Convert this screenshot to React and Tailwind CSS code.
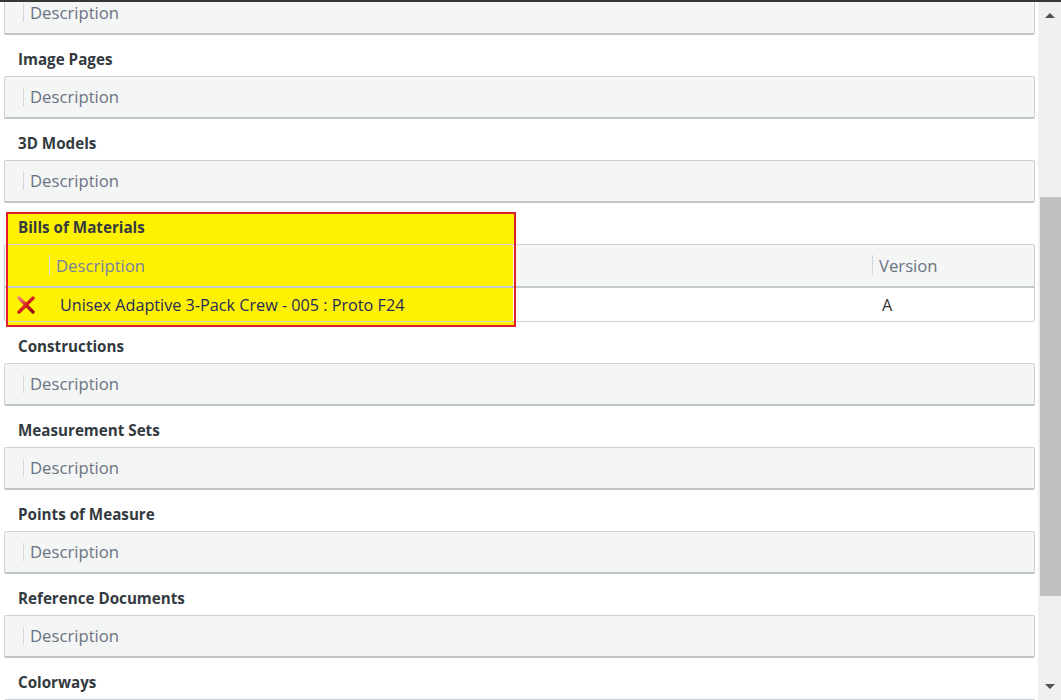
import React from "react";

const font = { fontFamily: '"Open Sans", "Noto Sans", sans-serif' };

function Heading({ children }) {
  return (
    <div className="h-[41px] pt-[14px] pl-[14px] text-[15.2px] leading-[21px] font-bold text-[#333a40]">
      {children}
    </div>
  );
}

function EmptyPanel() {
  return (
    <div className="h-[43px] rounded-[2px] border border-[#cfd2d4] border-b-2 border-b-[#bfc4c7] bg-[#f4f5f5] flex items-center pl-[18px]">
      <span className="w-px h-[18px] bg-[#d3d6d8]" />
      <span className="pl-[6px] text-[16.7px] text-[#6b7381]">Description</span>
    </div>
  );
}

function DeleteIcon() {
  return (
    <svg width="20" height="18" viewBox="0 0 20 18">
      <defs>
        <linearGradient id="xg" x1="0" y1="0" x2="1" y2="1">
          <stop offset="0" stopColor="#f28080" />
          <stop offset="0.5" stopColor="#d42020" />
          <stop offset="1" stopColor="#8e1010" />
        </linearGradient>
      </defs>
      <path d="M3 2 L17 16" stroke="url(#xg)" strokeWidth="3.4" strokeLinecap="round" />
      <path d="M17 2 L3 16" stroke="url(#xg)" strokeWidth="3.4" strokeLinecap="round" />
    </svg>
  );
}

function BomSection() {
  return (
    <div className="relative">
      {/* highlight behind content */}
      <div className="absolute left-[2px] top-[9px] w-[509px] h-[114px] bg-[#fff200]" />
      <div className="relative">
        <Heading>Bills of Materials</Heading>
        <div className="rounded-[2px] border border-[#cfd2d4] overflow-hidden">
          <div className="h-[43px] flex items-center border-b-2 border-b-[#c3c8cb] bg-[linear-gradient(90deg,transparent_0,transparent_508px,#f4f5f5_508px)] text-[16.7px] text-[#6b7381]">
            <div className="w-[44px]" />
            <div className="flex-1 flex items-center">
              <span className="w-px h-[20px] bg-[#d3d6d8]" />
              <span className="pl-[6px] text-[#7680a6]">Description</span>
            </div>
            <div className="w-[162px] flex items-center">
              <span className="w-px h-[20px] bg-[#d3d6d8]" />
              <span className="pl-[6px]">Version</span>
            </div>
          </div>
          <div className="h-[33px] pt-[1px] flex items-center bg-[linear-gradient(90deg,transparent_0,transparent_508px,#ffffff_508px)] text-[16.2px]">
            <div className="w-[44px] pl-[11px] flex items-center">
              <DeleteIcon />
            </div>
            <div className="flex-1 pl-[11px] text-[#1f2a5c]">
              Unisex Adaptive 3-Pack Crew - 005 : Proto F24
            </div>
            <div className="w-[162px] pl-[10px] text-[#333]">A</div>
          </div>
        </div>
      </div>
      {/* red outline on top */}
      <div className="absolute left-[2px] top-[9px] w-[510px] h-[115px] border-2 border-[#e31e2b] pointer-events-none" />
    </div>
  );
}

export default function App() {
  const after = [
    "Constructions",
    "Measurement Sets",
    "Points of Measure",
    "Reference Documents",
  ];
  return (
    <div style={font} className="w-[1061px] h-[700px] flex flex-col overflow-hidden bg-white">
      <div className="h-[2px] bg-[#383838] shrink-0" />
      <div className="flex flex-1 min-h-0">
        <div className="flex-1 overflow-hidden pl-[4px] pr-[3px]">
          <div className="-mt-[10px]">
            <EmptyPanel />
          </div>
          <Heading>Image Pages</Heading>
          <EmptyPanel />
          <Heading>3D Models</Heading>
          <EmptyPanel />
          <BomSection />
          {after.map((t) => (
            <div key={t}>
              <Heading>{t}</Heading>
              <EmptyPanel />
            </div>
          ))}
          <Heading>Colorways</Heading>
          <EmptyPanel />
        </div>
        <div className="w-[23px] shrink-0 bg-[#f0f0f0] flex flex-col items-center">
          <div className="h-[20px] flex items-center justify-center pt-[6px]">
            <span className="w-0 h-0 border-l-[5px] border-r-[5px] border-b-[5px] border-l-transparent border-r-transparent border-b-[#505050]" />
          </div>
          <div className="h-[175px]" />
          <div className="w-[21px] h-[399px] bg-[#c1c1c1] ml-[2px]" />
          <div className="flex-1" />
          <div className="h-[16px] flex items-start justify-center">
            <span className="w-0 h-0 border-l-[5px] border-r-[5px] border-t-[5px] border-l-transparent border-r-transparent border-t-[#505050]" />
          </div>
        </div>
      </div>
    </div>
  );
}
